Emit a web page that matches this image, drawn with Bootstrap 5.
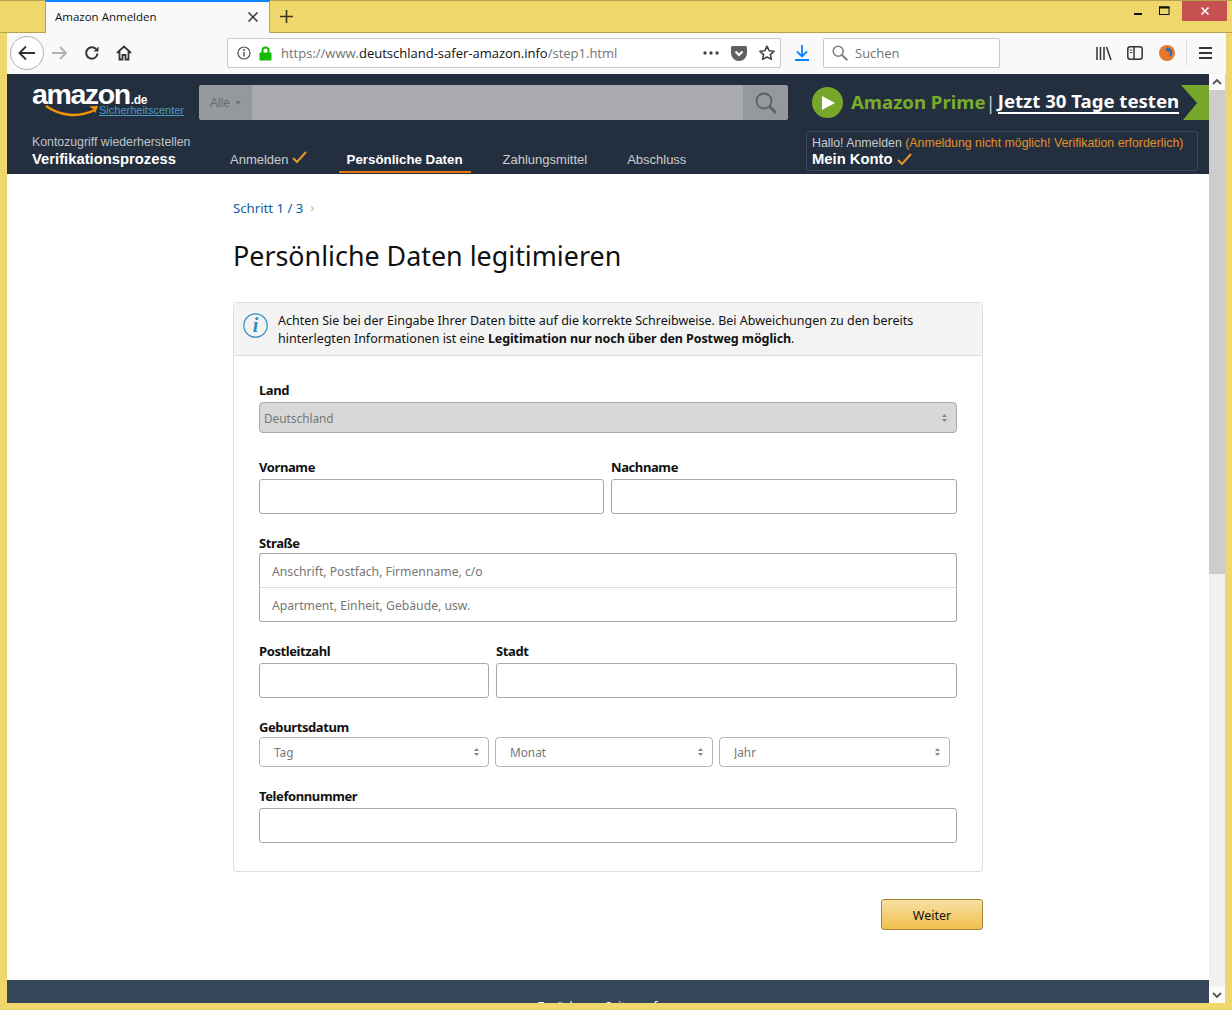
<!DOCTYPE html>
<html lang="de">
<head>
<meta charset="utf-8">
<title>Amazon Anmelden</title>
<link href="https://cdn.jsdelivr.net/npm/bootstrap@5.3.0/dist/css/bootstrap.min.css" rel="stylesheet">
<style>
html,body{height:1010px;overflow:hidden}
body{background:#efd76b;font-family:"Noto Sans","Open Sans",sans-serif;color:#111}
.win{height:1010px;display:flex;flex-direction:column}
.tabstrip{height:33px;flex:none;display:flex;border-top:1px solid #b7a34d;border-bottom:1px solid #b7a34d;position:relative}
.tabitem{margin-left:45px;width:225px;height:33px;margin-top:-1px;background:#f9f9fa;border-top:2px solid #0a84ff;border-left:1px solid #b7a34d;border-right:1px solid #b7a34d;display:flex;align-items:center;padding:0 10px 2px 9px;font:11.5px "Open Sans","Noto Sans",sans-serif;color:#111}
.tabnew{margin-left:9px;align-self:center;display:flex}
.winbtns{margin-left:auto;display:flex;align-items:flex-start;height:21px;margin-right:5px}
.winbtn{width:35px;height:20px;display:flex;align-items:center;justify-content:center}
.winmin{padding-left:16px}
.winclose{width:45px;background:#c75050}
.frameinner{flex:1;display:flex;flex-direction:column;padding:0 7px;min-height:0;padding-bottom:7px}
.toolbar{height:41px;flex:none;background:#f9f9fa;display:flex;align-items:center;position:relative;margin-right:-1px;padding-bottom:1px}
.backbtn{width:34px;height:34px;border:1px solid #b1b1b3;border-radius:50%;background:#fff;display:flex;align-items:center;justify-content:center;margin-left:3px}
.tbicon{display:flex;width:16px;height:16px}
.gap16{margin-left:16px}
.gap15{margin-left:15px}
.urlbar{margin-left:95px;width:554px;height:30px;background:#fff;border:1px solid #c8c8ca;border-radius:2px;display:flex;align-items:center;padding:0 5px 0 9px;font:13px "Open Sans","Noto Sans",sans-serif;color:#737373}
.urlbar b{font-weight:400;color:#111}
.lockicon{margin-right:9px;flex:none}
.dlicon{margin-left:14px}
.searchbar{margin-left:14px;width:177px;height:30px;background:#fff;border:1px solid #c8c8ca;border-radius:2px;display:flex;align-items:center;padding-left:8px;font:13px "Open Sans","Noto Sans",sans-serif;color:#737373;gap:7px}
.libicon{margin-left:96px}
.tbdivider{margin-left:11px}
.menuicon{margin-left:12px}
.viewport{flex:1;display:flex;min-height:0;overflow:hidden}
.pagearea{flex:1;min-width:0;background:#fff;display:flex;flex-direction:column;overflow:hidden}
.scrolltrack{width:16px;flex:none;background:#f0f0f0;display:flex;flex-direction:column;align-items:stretch}
.scrollcap{height:16px;background:#f0f0f0;display:flex;align-items:center;justify-content:center;flex:none}
.capwhite{background:#fbfbfb}
.scrollthumb{height:484px;background:#cdcdcd;flex:none}
.scrollrest{flex:1}
.amzhead{height:100px;flex:none;background:#232f3e;font-family:"Liberation Sans",Arial,sans-serif;color:#ccc;font-size:12px}
.headtop{display:flex;height:56px;padding-top:11px}
.logoblock{width:167px;margin-left:25px;margin-right:0;position:relative;height:36px;margin-top:-3px;flex:none}
.logotext{margin-top:-3px;white-space:nowrap}
.logoword{color:#fff;font:700 28.5px/30px "Liberation Sans",Arial,sans-serif;letter-spacing:-1.4px;display:inline-block}
.logode{font:700 12px/13px "Liberation Sans",Arial,sans-serif;color:#fff;letter-spacing:-.3px;margin-left:1px}
.logosmile{position:absolute;left:13px;top:23px}
.logolink{position:absolute;left:67px;top:21px;font-size:11px;line-height:14px;color:#4a9cc0;text-decoration:underline}
.searchwrap{width:589px;height:35px;border-radius:3px;background:#a9abae;display:flex;overflow:hidden;flex:none}
.searchcat{width:53px;background:#95989c;color:#686a6d;display:flex;align-items:center;justify-content:center;gap:5px;font-size:12px}
.caretmini{width:0;height:0;border:3px solid transparent;border-top:4px solid #74777a;border-bottom:0}
.searchgo{margin-left:auto;width:45px;background:#95989c;display:flex;align-items:center;justify-content:center}
.primeblock{margin-left:24px;flex:1;display:flex;align-items:center;height:35px;font:700 18.6px/35px "Noto Sans","Open Sans",sans-serif;white-space:nowrap;min-width:0}
.primecircle{width:31px;height:31px;border-radius:50%;background:#76a72b;flex:none;display:flex;align-items:center;justify-content:center;margin-right:8px}
.primegreen{color:#7aab2d;margin-top:-2px}
.primesep{color:#c8ccd0;font-weight:400;margin:0 2px 0 0}
.primecta{color:#fff;border-bottom:2px solid #fff;line-height:22px;margin-top:-1px}
.primeflag{margin-left:auto;display:flex;flex:none}
.headbottom{display:flex;height:44px;align-items:flex-end}
.procblock{width:190px;margin-left:25px;padding-bottom:6px;flex:none}
.proctitle{color:#bfc3c8;font-size:12.3px;line-height:16px;white-space:nowrap}
.procmain{color:#fff;font-weight:700;font-size:14.8px;line-height:18px}
.stepnav{display:flex;height:44px;align-items:flex-end;flex:none}
.stepitem{height:33px;padding:5px 8px 0;margin-right:24px;color:#ccc;font-size:13px;line-height:30px;display:flex;align-items:flex-start;gap:3px;border-bottom:2px solid transparent;white-space:nowrap;margin-bottom:1px}
.stepactive{color:#fff;font-weight:700;font-size:13.3px;border-bottom-color:#e47911}
.stepcheck{margin-top:6px}
.acctbox{margin-left:auto;margin-right:11px;width:392px;height:40px;border:1px solid #3d4957;border-radius:3px;padding:3px 5px;margin-bottom:3px;flex:none}
.accttop{font-size:12.33px;line-height:17px;color:#c7cbd0;white-space:nowrap}
.acctwarn{color:#e4902a}
.acctmain{color:#fff;font-weight:700;font-size:14.8px;line-height:16px;display:flex;align-items:center;gap:4px;margin-top:-1px}
.formwrap{width:750px;margin:0 auto;flex:none}
.crumbs{margin-top:26px;font-size:13.2px;line-height:16px;height:16px;color:#0f5da3;display:flex;gap:7px}
.crumbarrow{color:#e8a36a;font-size:12px}
.pagetitle{font-size:26.85px;font-weight:400;line-height:36px;margin:22px 0 28px;color:#111}
.infocard{border-color:#dddddd;border-radius:4px}
.infohead{height:53px;background:#f3f3f3;border-color:#ddd;padding:9px 0 0 9px;display:flex;gap:10px;font-size:12.5px;line-height:18px;color:#111}
.infohead b{letter-spacing:-.1px}
.infoicon{flex:none;margin-top:1px}
.infobody{padding:25px 25px 28px}
.fldlabel{font-weight:700;font-size:13px;line-height:18px;margin:0;color:#111;display:block;letter-spacing:-.4px}
.lblgap3{margin-bottom:3px}
.lblgap1{margin-bottom:1px}
.fldinput{height:35px;border:1px solid #a9a9a9;border-radius:3px;padding:0 12px;font-size:12.2px;background:#fff;box-shadow:none}
.fldinput::placeholder{color:#777}
.fldselect{height:30px;border:1px solid #b5b5b5;border-radius:4px;font-size:11.8px;line-height:28px;padding:0 14px;color:#777;background-color:#fff;background-image:url("data:image/svg+xml,%3Csvg xmlns='http://www.w3.org/2000/svg' width='6' height='9'%3E%3Cpath d='M3 0l3 3.500H0zM3 9L0 5.500h6z' fill='%23888'/%3E%3C/svg%3E");background-repeat:no-repeat;background-position:right 9px center;background-size:5px 8px}
.landsel{height:31px;padding-left:4px;background-color:#d8d8d8;border-color:#a9a9a9;opacity:1;color:#777;margin-top:3px}
.landsel:disabled{background-color:#d8d8d8;color:#777}
.fldrow{display:flex;gap:7px}
.fldcol{min-width:0}
.firsthalf{width:345px;flex:none}
.plzcol{width:230px;flex:none}
.dobrow{display:flex;gap:6px}
.dobtag{width:230px;flex:none}
.dobmon{width:218px;flex:none;padding-left:14px}
.dobyear{width:231px;flex:none}
.grp1{margin-top:25px}
.grp2{margin-top:20px}
.addrgroup .fldinput{height:35px;border-radius:0;padding-top:2px}
.addrgroup .fldinput:first-child{border-radius:3px 3px 0 0;border-bottom-color:#ddd}
.addrgroup .fldinput:last-child{border-radius:0 0 3px 3px;border-top:0;height:34px}
.weiterrow{display:flex;justify-content:flex-end;margin-top:27px}
.weiterbtn{width:102px;height:31px;padding:4px 0 0;border:1px solid #a88734;border-radius:3px;background:linear-gradient(#f7dfa5,#f0c14b);font-size:12.5px;color:#111}
.amzfoot{margin-top:50px;flex:1;background:#37475a;color:#fff;text-align:center;font-size:11.7px;line-height:16px;padding-top:18px}
</style>
</head>
<body>
<div class="win">
  <div class="tabstrip">
    <div class="tabitem"><span>Amazon Anmelden</span>
      <svg class="ms-auto" width="12" height="12" viewBox="0 0 12 12"><path d="M1.500 1.500l9 9M10.500 1.500l-9 9" stroke="#333" stroke-width="1.500"/></svg>
    </div>
    <div class="tabnew"><svg width="15" height="15" viewBox="0 0 15 15"><path d="M7.500 1v13M1 7.500h13" stroke="#3a3520" stroke-width="1.600"/></svg></div>
    <div class="winbtns">
      <div class="winbtn winmin"><svg width="10" height="10" viewBox="0 0 10 10"><path d="M1 8h8" stroke="#111" stroke-width="2"/></svg></div>
      <div class="winbtn"><svg width="11" height="10" viewBox="0 0 11 10"><rect x=".5" y="1" width="9.500" height="7.500" fill="none" stroke="#111" stroke-width="1"/><path d="M0 1.500h10.500" stroke="#111" stroke-width="2"/></svg></div>
      <div class="winbtn winclose"><svg width="10" height="10" viewBox="0 0 10 10"><path d="M1.500 1.500l7 7M8.500 1.500l-7 7" stroke="#fff" stroke-width="1.600"/></svg></div>
    </div>
  </div>
  <div class="frameinner">
    <div class="toolbar">
      <div class="backbtn"><svg width="18" height="16" viewBox="0 0 18 16"><path d="M8 1.500L1.500 8 8 14.500M2 8h15" fill="none" stroke="#333" stroke-width="1.900"/></svg></div>
      <svg class="tbicon ms-2" viewBox="0 0 16 16"><path d="M8 2l6 6-6 6M14 8H0" fill="none" stroke="#b1b1b3" stroke-width="1.800"/></svg>
      <svg class="tbicon gap16" viewBox="0 0 16 16"><path d="M13.500 8.500a5.700 5.700 0 1 1-1.600-4.500" fill="none" stroke="#333" stroke-width="2"/><path d="M14.500 1.500v5h-5z" fill="#333"/></svg>
      <svg class="tbicon gap16" viewBox="0 0 16 16"><path d="M1 8l7-6.500L15 8M3.500 6.500V14.500h3V10h3v4.500h3V6.500" fill="none" stroke="#333" stroke-width="1.800"/></svg>
      <div class="urlbar">
        <svg width="14" height="14" viewBox="0 0 14 14" class="me-2 flex-none"><circle cx="7" cy="7" r="6" fill="none" stroke="#555" stroke-width="1.200"/><path d="M7 6v4.500" stroke="#555" stroke-width="1.500"/><circle cx="7" cy="3.900" r="1" fill="#555"/></svg>
        <svg width="13" height="15" viewBox="0 0 13 15" class="lockicon"><path d="M3.500 7V4.500a3 3 0 0 1 6 0V7" fill="none" stroke="#12bc00" stroke-width="2"/><rect x="0.500" y="6.500" width="12" height="8" rx="1" fill="#12bc00"/></svg>
        <span>https://www.<b>deutschland-safer-amazon.info</b>/step1.html</span>
        <span class="ms-auto d-flex align-items-center gap-2">
          <svg width="16" height="4" viewBox="0 0 16 4"><circle cx="2" cy="2" r="1.700" fill="#444"/><circle cx="8" cy="2" r="1.700" fill="#444"/><circle cx="14" cy="2" r="1.700" fill="#444"/></svg>
          <svg class="ms-1" width="16" height="15" viewBox="0 0 16 15"><path d="M1.500 0h13A1.500 1.500 0 0 1 16 1.500V7a8 8 0 0 1-16 0V1.500A1.500 1.500 0 0 1 1.500 0z" fill="#606060"/><path d="M4.500 5.500L8 9l3.500-3.500" fill="none" stroke="#fff" stroke-width="2.200"/></svg>
          <svg class="ms-1" width="16" height="16" viewBox="0 0 16 16"><path d="M8 1.200l2.100 4.500 4.900.6-3.600 3.300 1 4.800L8 12l-4.400 2.400 1-4.800L1 6.300l4.900-.6z" fill="none" stroke="#444" stroke-width="1.600" stroke-linejoin="round"/></svg>
        </span>
      </div>
      <svg class="dlicon" width="14" height="16" viewBox="0 0 14 16"><path d="M7 0v11M2 6.500L7 11.500l5-5" fill="none" stroke="#0a84ff" stroke-width="1.800"/><path d="M0 15h14" stroke="#0a84ff" stroke-width="2"/></svg>
      <div class="searchbar">
        <svg width="16" height="16" viewBox="0 0 16 16"><circle cx="6.200" cy="6.200" r="5" fill="none" stroke="#808080" stroke-width="1.600"/><path d="M10 10l5.300 5.300" stroke="#808080" stroke-width="2"/></svg>
        <span>Suchen</span>
      </div>
      <svg class="libicon" width="16" height="15" viewBox="0 0 16 15"><path d="M1 1v13M4.500 1v13M8 1v13M10.500 1l4.500 13" stroke="#333" stroke-width="1.500"/></svg>
      <svg class="gap15" width="16" height="14" viewBox="0 0 16 14"><rect x=".8" y=".8" width="14.400" height="12.400" rx="2.500" fill="none" stroke="#333" stroke-width="1.500"/><path d="M7 1v12" stroke="#333" stroke-width="1.500"/><path d="M2.800 4h2.500M2.800 6.500h2.500" stroke="#333" stroke-width="1.200"/></svg>
      <svg class="gap16" width="16" height="16" viewBox="0 0 16 16"><circle cx="8" cy="8" r="8" fill="#e8772e"/><path d="M8 2.500a5.500 5.500 0 0 1 5.300 6.500c-.5 2-2.500 3-4 2.300 1.500-.5 2-2 1.500-3.300C10 6.200 8 5.800 6.500 6 7 4.500 7 3.500 8 2.500z" fill="#2b6fb6"/></svg>
      <svg class="tbdivider" width="1" height="26" viewBox="0 0 1 26"><path d="M.5 0v26" stroke="#e0e0e2"/></svg>
      <svg class="menuicon" width="13" height="12" viewBox="0 0 13 12"><path d="M0 1h13M0 6h13M0 11h13" stroke="#333" stroke-width="1.800"/></svg>
    </div>
    <div class="viewport">
      <div class="pagearea">
        <header class="amzhead">
          <div class="headtop">
            <div class="logoblock">
              <div class="logotext"><span class="logoword">amazon</span><span class="logode">.de</span></div>
              <svg class="logosmile" width="56" height="13" viewBox="0 0 56 13"><path d="M1 1c14 10 32 12 49 4" fill="none" stroke="#f79400" stroke-width="2.400"/><path d="M44 1.500l9-.5-3 7.500-1-4z" fill="#f79400"/></svg>
              <a class="logolink">Sicherheitscenter</a>
            </div>
            <div class="searchwrap">
              <div class="searchcat"><span>Alle</span><span class="caretmini"></span></div>
              <div class="searchgo"><svg width="22" height="22" viewBox="0 0 22 22"><circle cx="9" cy="9" r="7.500" fill="none" stroke="#5e6062" stroke-width="1.800"/><path d="M14.500 14.500l6.500 6.500" stroke="#5e6062" stroke-width="2.600"/></svg></div>
            </div>
            <div class="primeblock">
              <div class="primecircle"><svg width="14" height="14" viewBox="0 0 14 14"><path d="M1 0l13 7-13 7z" fill="#fff"/></svg></div>
              <span class="primegreen">Amazon Prime</span><span class="primesep">|</span><span class="primecta">Jetzt 30 Tage testen</span>
              <svg class="primeflag" width="28" height="35" viewBox="0 0 28 35"><path d="M0 0h28v35H2L16 18z" fill="#76a72b"/></svg>
            </div>
          </div>
          <div class="headbottom">
            <div class="procblock">
              <div class="proctitle">Kontozugriff wiederherstellen</div>
              <div class="procmain">Verifikationsprozess</div>
            </div>
            <nav class="stepnav">
              <div class="stepitem">Anmelden <svg class="stepcheck" width="15" height="13" viewBox="0 0 15 13"><path d="M1 7l4 4L14 1" fill="none" stroke="#e8962c" stroke-width="2"/></svg></div>
              <div class="stepitem stepactive">Persönliche Daten</div>
              <div class="stepitem">Zahlungsmittel</div>
              <div class="stepitem">Abschluss</div>
            </nav>
            <div class="acctbox">
              <div class="accttop">Hallo! Anmelden <span class="acctwarn">(Anmeldung nicht möglich! Verifikation erforderlich)</span></div>
              <div class="acctmain">Mein Konto <svg width="15" height="12" viewBox="0 0 15 12"><path d="M1 7l4 4L14 1" fill="none" stroke="#e8962c" stroke-width="2"/></svg></div>
            </div>
          </div>
        </header>
        <main class="formwrap">
          <div class="crumbs"><span>Schritt 1 / 3</span><span class="crumbarrow">›</span></div>
          <h1 class="pagetitle">Persönliche Daten legitimieren</h1>
          <div class="card infocard">
            <div class="card-header infohead">
              <svg class="infoicon" width="25" height="25" viewBox="0 0 25 25"><circle cx="12.500" cy="12.500" r="11.700" fill="none" stroke="#2d8fb8" stroke-width="1.200"/><text x="12.500" y="19" text-anchor="middle" font-family="Liberation Serif" font-style="italic" font-weight="700" font-size="20" fill="#2d8fb8">i</text></svg>
              <div>Achten Sie bei der Eingabe Ihrer Daten bitte auf die korrekte Schreibweise. Bei Abweichungen zu den bereits hinterlegten Informationen ist eine <b>Legitimation nur noch über den Postweg möglich</b>.</div>
            </div>
            <div class="card-body infobody">
              <label class="fldlabel">Land</label>
              <select class="form-select fldselect landsel" disabled><option>Deutschland</option></select>
              <div class="fldrow grp1">
                <div class="fldcol firsthalf"><label class="fldlabel lblgap3">Vorname</label><input class="form-control fldinput"></div>
                <div class="fldcol flex-fill"><label class="fldlabel lblgap3">Nachname</label><input class="form-control fldinput"></div>
              </div>
              <div class="grp2">
                <label class="fldlabel lblgap1">Straße</label>
                <div class="addrgroup"><input class="form-control fldinput" placeholder="Anschrift, Postfach, Firmenname, c/o"><input class="form-control fldinput" placeholder="Apartment, Einheit, Gebäude, usw."></div>
              </div>
              <div class="fldrow grp2">
                <div class="fldcol plzcol"><label class="fldlabel lblgap3">Postleitzahl</label><input class="form-control fldinput"></div>
                <div class="fldcol flex-fill"><label class="fldlabel lblgap3">Stadt</label><input class="form-control fldinput"></div>
              </div>
              <div class="grp2">
                <label class="fldlabel lblgap1">Geburtsdatum</label>
                <div class="dobrow">
                  <select class="form-select fldselect dobtag"><option>Tag</option></select>
                  <select class="form-select fldselect dobmon"><option>Monat</option></select>
                  <select class="form-select fldselect dobyear"><option>Jahr</option></select>
                </div>
              </div>
              <div class="grp2">
                <label class="fldlabel lblgap3">Telefonnummer</label>
                <input class="form-control fldinput">
              </div>
            </div>
          </div>
          <div class="weiterrow"><button class="btn weiterbtn" type="button">Weiter</button></div>
        </main>
        <footer class="amzfoot">Zurück zum Seitenanfang</footer>
      </div>
      <div class="scrolltrack">
        <div class="scrollcap capwhite"><svg width="10" height="6" viewBox="0 0 10 6"><path d="M1 5l4-4 4 4" fill="none" stroke="#555" stroke-width="1.800"/></svg></div>
        <div class="scrollthumb"></div>
        <div class="scrollrest"></div>
        <div class="scrollcap capwhite"><svg width="10" height="6" viewBox="0 0 10 6"><path d="M1 1l4 4 4-4" fill="none" stroke="#555" stroke-width="1.800"/></svg></div>
      </div>
    </div>
  </div>
</div>
<script src="https://cdn.jsdelivr.net/npm/bootstrap@5.3.0/dist/js/bootstrap.bundle.min.js"></script>
</body>
</html>
